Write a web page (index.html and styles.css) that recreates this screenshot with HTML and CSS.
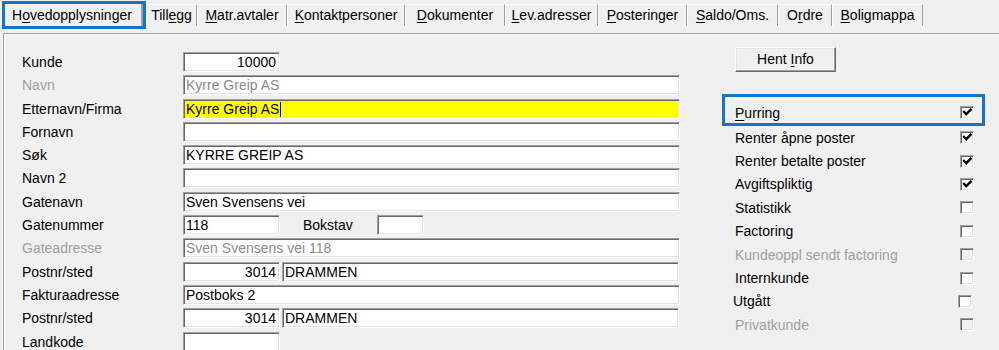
FILE: index.html
```html
<!DOCTYPE html>
<html lang="no">
<head>
<meta charset="utf-8">
<title>Kunde</title>
<link rel="stylesheet" href="styles.css">
</head>
<body>
<div class="tabbar">
  <div class="tab active">H<u>o</u>vedopplysninger</div>
  <div class="tab">Till<u>e</u>gg</div>
  <div class="tab"><u>M</u>atr.avtaler</div>
  <div class="tab"><u>K</u>ontaktpersoner</div>
  <div class="tab"><u>D</u>okumenter</div>
  <div class="tab"><u>L</u>ev.adresser</div>
  <div class="tab"><u>P</u>osteringer</div>
  <div class="tab"><u>S</u>aldo/Oms.</div>
  <div class="tab">O<u>r</u>dre</div>
  <div class="tab"><u>B</u>oligmappa</div>
</div>
<div class="page">
  <div class="form">
    <div class="label">Kunde</div>
    <div class="cell"><div class="field short num">10000</div></div>

    <div class="label disabled">Navn</div>
    <div class="cell"><div class="field dis">Kyrre Greip AS</div></div>

    <div class="label">Etternavn/Firma</div>
    <div class="cell"><div class="field focus">Kyrre Greip AS<span class="caret"></span></div></div>

    <div class="label">Fornavn</div>
    <div class="cell"><div class="field"></div></div>

    <div class="label">Søk</div>
    <div class="cell"><div class="field">KYRRE GREIP AS</div></div>

    <div class="label">Navn 2</div>
    <div class="cell"><div class="field"></div></div>

    <div class="label">Gatenavn</div>
    <div class="cell"><div class="field">Sven Svensens vei</div></div>

    <div class="label">Gatenummer</div>
    <div class="cell">
      <div class="field short">118</div>
      <div class="sublabel">Bokstav</div>
      <div class="field tiny"></div>
    </div>

    <div class="label disabled">Gateadresse</div>
    <div class="cell"><div class="field dis">Sven Svensens vei 118</div></div>

    <div class="label">Postnr/sted</div>
    <div class="cell pair">
      <div class="field short num">3014</div>
      <div class="field place">DRAMMEN</div>
    </div>

    <div class="label">Fakturaadresse</div>
    <div class="cell"><div class="field">Postboks 2</div></div>

    <div class="label">Postnr/sted</div>
    <div class="cell pair">
      <div class="field short num">3014</div>
      <div class="field place">DRAMMEN</div>
    </div>

    <div class="label">Landkode</div>
    <div class="cell"><div class="field short"></div></div>
  </div>

  <div class="side">
    <div class="button">Hent <u>I</u>nfo</div>
    <div class="checks">
      <div class="check-row focused">
        <span><u>P</u>urring</span>
        <span class="box"><svg viewBox="0 0 13 13" width="13" height="13"><path d="M2.3 5 L5.2 8.2 L10.5 2.8" fill="none" stroke="#000" stroke-width="2.4"/></svg></span>
      </div>
      <div class="check-row">
        <span>Renter åpne poster</span>
        <span class="box"><svg viewBox="0 0 13 13" width="13" height="13"><path d="M2.3 5 L5.2 8.2 L10.5 2.8" fill="none" stroke="#000" stroke-width="2.4"/></svg></span>
      </div>
      <div class="check-row">
        <span>Renter betalte poster</span>
        <span class="box"><svg viewBox="0 0 13 13" width="13" height="13"><path d="M2.3 5 L5.2 8.2 L10.5 2.8" fill="none" stroke="#000" stroke-width="2.4"/></svg></span>
      </div>
      <div class="check-row">
        <span>Avgiftspliktig</span>
        <span class="box"><svg viewBox="0 0 13 13" width="13" height="13"><path d="M2.3 5 L5.2 8.2 L10.5 2.8" fill="none" stroke="#000" stroke-width="2.4"/></svg></span>
      </div>
      <div class="check-row">
        <span>Statistikk</span>
        <span class="box"></span>
      </div>
      <div class="check-row">
        <span>Factoring</span>
        <span class="box"></span>
      </div>
      <div class="check-row disabled">
        <span>Kundeoppl sendt factoring</span>
        <span class="box off"></span>
      </div>
      <div class="check-row">
        <span>Internkunde</span>
        <span class="box"></span>
      </div>
      <div class="check-row shifted">
        <span>Utgått</span>
        <span class="box"></span>
      </div>
      <div class="check-row disabled">
        <span>Privatkunde</span>
        <span class="box off"></span>
      </div>
    </div>
  </div>
</div>
</body>
</html>
```

FILE: styles.css
```css
html, body {
  margin: 0;
  padding: 0;
}
body {
  width: 999px;
  height: 350px;
  overflow: hidden;
  background: #f0f0f0;
  font-family: "Liberation Sans", Arial, sans-serif;
  font-size: 14px;
  color: #000;
}
u {
  text-decoration: underline;
  text-underline-offset: 2px;
}

/* tabs */
.tabbar {
  display: grid;
  grid-template-columns: 144px 51px 90px 118px 100px 93px 89px 91px 54px 91px;
  align-items: start;
  height: 33px;
  padding-left: 2px;
  box-sizing: border-box;
}
.tab {
  margin-top: 4px;
  height: 22px;
  line-height: 21px;
  text-align: center;
  box-sizing: border-box;
  border-top: 1px solid #fff;
  border-left: 1px solid #fff;
  border-right: 1px solid #a0a0a0;
  white-space: nowrap;
}
.tab.active {
  margin-top: 1px;
  height: 28px;
  line-height: 22px;
  text-align: left;
  padding-left: 7px;
  border: 3px solid #1274cc;
  box-shadow: inset -2px 0 0 #a0a0a0;
}

/* page */
.page {
  margin-left: 3px;
  border-top: 1px solid #a0a0a0;
  border-left: 1px solid #a0a0a0;
  box-shadow: inset 1px 1px 0 #fff;
  display: grid;
  grid-template-columns: 718px 263px;
  height: 317px;
}
.form {
  display: grid;
  grid-template-columns: 161px 497px;
  grid-auto-rows: 20px;
  row-gap: 3.3px;
  padding: 18px 0 0 18px;
  align-items: center;
}
.label {
  line-height: 20px;
  white-space: nowrap;
}
.label.disabled {
  color: #a0a0a0;
}
.cell {
  display: flex;
  align-items: center;
  height: 20px;
}
.field {
  box-sizing: border-box;
  height: 20px;
  width: 497px;
  background: #fff;
  border: 1px solid;
  border-color: #a0a0a0 #fff #fff #a0a0a0;
  box-shadow: inset 1px 1px 0 #696969, inset -1px -1px 0 #e3e3e3;
  padding: 0 3px 0 2px;
  line-height: 18px;
  white-space: nowrap;
  overflow: hidden;
}
.field.short {
  width: 97px;
}
.field.tiny {
  width: 47px;
}
.field.num {
  text-align: right;
}
.field.place {
  width: 397px;
  margin-left: 2px;
}
.field.dis {
  color: #8c8c8c;
}
.field.focus {
  background: #ffff00;
}
.caret {
  display: inline-block;
  width: 1px;
  height: 15px;
  background: #000;
  vertical-align: -3px;
  margin-left: 1px;
}
.sublabel {
  margin-left: 23px;
  width: 74px;
  line-height: 20px;
}

/* side */
.side {
  padding-top: 13px;
}
.button {
  margin-left: 13px;
  width: 101px;
  height: 25px;
  box-sizing: border-box;
  border: 1px solid;
  border-color: #fff #696969 #696969 #fff;
  box-shadow: inset -1px -1px 0 #a0a0a0, inset 1px 1px 0 #e3e3e3;
  text-align: center;
  line-height: 22px;
}
.checks {
  margin-top: 22px;
}
.check-row {
  display: flex;
  justify-content: space-between;
  align-items: center;
  height: 23.4px;
  padding: 0 11px 0 13px;
}
.check-row.focused {
  box-sizing: border-box;
  height: 32px;
  border: 3px solid #1274cc;
  padding: 5px 8px 0 10px;
}
.check-row.disabled {
  color: #a0a0a0;
}
.check-row.shifted {
  padding: 0 13px 0 11px;
}
.box {
  width: 14px;
  height: 13px;
  box-sizing: border-box;
  background: #fff;
  border: 1px solid;
  border-color: #a0a0a0 #fff #fff #a0a0a0;
  box-shadow: inset 1px 1px 0 #696969, inset -1px -1px 0 #e3e3e3;
  display: flex;
  align-items: center;
  justify-content: center;
  overflow: hidden;
}
.box svg {
  display: block;
  flex: none;
}
.box.off {
  background: #f0f0f0;
}
```
